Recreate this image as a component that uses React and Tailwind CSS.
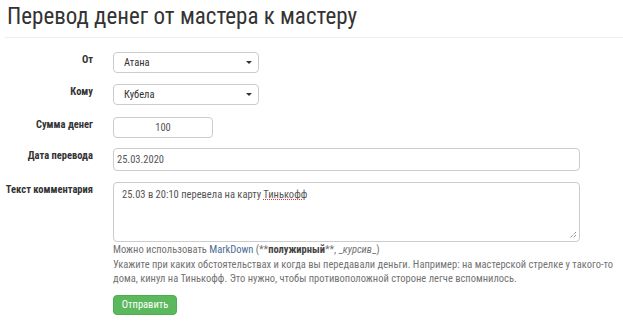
import React from 'react';

const Caret = () => (
  <span className="w-0 h-0 border-x-[3px] border-x-transparent border-t-[3px] border-t-[#333]"></span>
);

const Row = ({ label, children, className = '' }) => (
  <div className={`flex ${className}`}>
    <label className="w-[93px] shrink-0 text-right font-bold text-[10.5px] leading-[14px] text-[#333] pt-[1px] whitespace-nowrap">{label}</label>
    <div className="ml-[20px] flex-1 pr-[6px]">{children}</div>
  </div>
);

const App = () => {
  return (
    <div className="w-[623px] h-[322px] bg-white overflow-hidden font-['Roboto',sans-serif] font-stretch-[75%]">
      <h1 className="pl-[7px] pt-[3px] text-[23px] leading-[28px] text-[#333] font-normal">Перевод денег от мастера к мастеру</h1>
      <div className="ml-[5px] mt-[6px] border-t border-[#eee]"></div>

      <div className="pt-[14px] flex flex-col">
        <Row label="От">
          <div className="w-[146px] h-[21px] border border-[#ccc] rounded-[4px] flex items-center justify-between pl-[10px] pr-[6px] text-[10.5px] text-[#333]">
            <span>Атана</span>
            <Caret />
          </div>
        </Row>
        <Row label="Кому" className="mt-[11px]">
          <div className="w-[146px] h-[21px] border border-[#ccc] rounded-[4px] flex items-center justify-between pl-[10px] pr-[6px] text-[10.5px] text-[#333]">
            <span>Кубела</span>
            <Caret />
          </div>
        </Row>
        <Row label="Сумма денег" className="mt-[12px]">
          <div className="w-[100px] h-[21px] border border-[#ccc] rounded-[4px] flex items-center justify-center text-[10.5px] text-[#555]">
            100
          </div>
        </Row>
        <Row label="Дата перевода" className="mt-[10px]">
          <div className="mr-[37px] h-[23px] border border-[#ccc] rounded-[4px] flex items-center pl-[3px] text-[10.5px] text-[#555]">
            25.03.2020
          </div>
        </Row>
        <Row label="Текст комментария" className="mt-[11px]">
          <div className="mr-[37px] relative h-[60px] border border-[#ccc] rounded-[4px] pl-[8px] pt-[4px] text-[10.5px] text-[#555]">
            25.03 в 20:10 перевела на карту <span className="underline decoration-dotted decoration-red-500">Тинькофф</span>
            <svg className="absolute right-[2px] bottom-[2px]" width="8" height="8" viewBox="0 0 8 8">
              <path d="M7 1 L1 7 M7 4 L4 7" stroke="#666" strokeWidth="1" strokeDasharray="1 1" />
            </svg>
          </div>
          <div className="text-[10.5px] text-[#737373]">
            <p className="leading-[15px]">
              Можно использовать <span className="text-[#4a6d93]">MarkDown</span> (**<b className="text-[#444]">полужирный</b>**, _<i>курсив</i>_)
            </p>
            <p className="mt-[1px] leading-[14px]">
              Укажите при каких обстоятельствах и когда вы передавали деньги. Например: на мастерской стрелке у такого-то дома, кинул на Тинькофф. Это нужно, чтобы противоположной стороне легче вспомнилось.
            </p>
          </div>
          <button className="mt-[9px] w-[64px] h-[20px] rounded-[4px] bg-[#5cb85c] border border-[#4cae4c] text-white text-[10.5px] flex items-center justify-center">
            Отправить
          </button>
        </Row>
      </div>
    </div>
  );
};

export default App;
